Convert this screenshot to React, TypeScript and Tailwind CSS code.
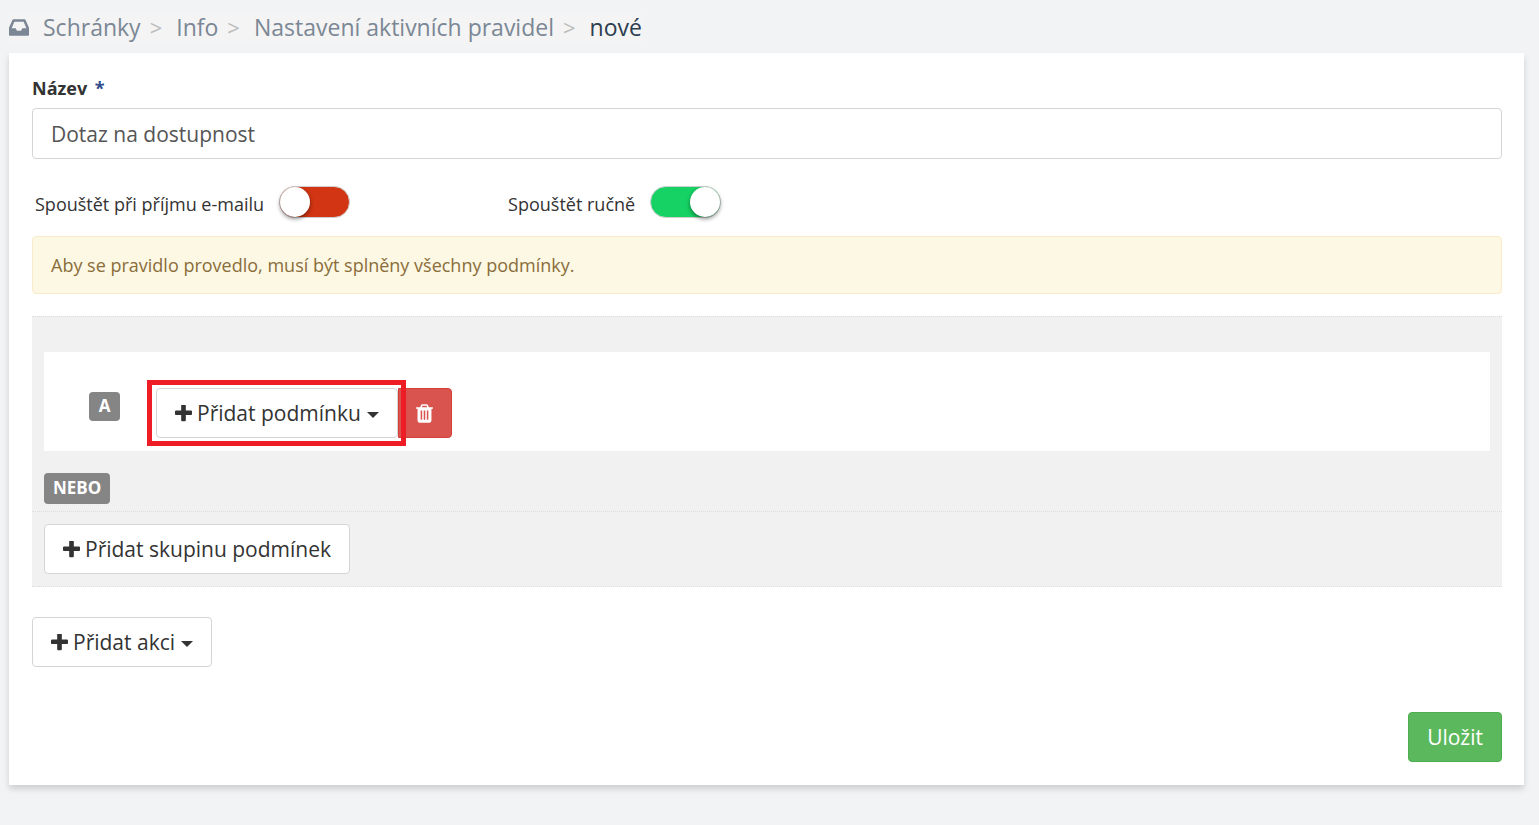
import { useState } from "react";

const BUTTON =
  "flex h-[50px] items-center rounded border border-[#d5d5d5] bg-white px-[18px] text-[21px] leading-[30px] text-[#333]";

function InboxIcon() {
  return (
    <svg viewBox="128 256 1536 1280" className="h-[17px] w-5" fill="currentColor">
      <path d="M1151 960h316q-1-3-2.500-8.500t-2.500-7.500l-212-496h-708l-212 496q-1 3-2.500 8.500t-2.500 7.500h316l95 192h320zm513 30v482q0 26-19 45t-45 19h-1408q-26 0-45-19t-19-45v-482q0-62 25-123l238-552q10-25 36.500-42t52.500-17h832q26 0 52.500 17t36.500 42l238 552q25 61 25 123z" />
    </svg>
  );
}

function PlusIcon() {
  return (
    <svg viewBox="192 192 1408 1408" className="mr-[5px] h-[17px] w-[17px]" fill="currentColor">
      <path d="M1600 736v192q0 40-28 68t-68 28h-416v416q0 40-28 68t-68 28h-192q-40 0-68-28t-28-68v-416h-416q-40 0-68-28t-28-68v-192q0-40 28-68t68-28h416v-416q0-40 28-68t68-28h192q40 0 68 28t28 68v416h416q40 0 68 28t28 68z" />
    </svg>
  );
}

function TrashIcon() {
  return (
    <svg viewBox="192 128 1408 1536" className="mt-px h-[19px] w-[17px]" fill="currentColor">
      <path d="M704 1376v-704q0-14-9-23t-23-9h-64q-14 0-23 9t-9 23v704q0 14 9 23t23 9h64q14 0 23-9t9-23zm256 0v-704q0-14-9-23t-23-9h-64q-14 0-23 9t-9 23v704q0 14 9 23t23 9h64q14 0 23-9t9-23zm256 0v-704q0-14-9-23t-23-9h-64q-14 0-23 9t-9 23v704q0 14 9 23t23 9h64q14 0 23-9t9-23zm-544-992h448l-48-117q-7-9-17-11h-317q-10 2-17 11zm928 32v64q0 14-9 23t-23 9h-96v948q0 83-47 143.500t-113 60.500h-832q-66 0-113-58.500t-47-141.500v-952h-96q-14 0-23-9t-9-23v-64q0-14 9-23t23-9h309l70-167q15-37 54-63t79-26h320q40 0 79 26t54 63l70 167h309q14 0 23 9t9 23z" />
    </svg>
  );
}

function Caret() {
  return (
    <svg viewBox="0 0 12 6" className="mt-1 ml-1.5 h-1.5 w-3" fill="currentColor">
      <path d="M0 0h12L6 6z" />
    </svg>
  );
}

function Separator() {
  return <span className="mr-3.5 ml-[9px] text-[22px] text-[#bbb]">&gt;</span>;
}

type SwitchProps = {
  label: string;
  checked: boolean;
  onChange: (checked: boolean) => void;
};

function Switch({ label, checked, onChange }: SwitchProps) {
  return (
    <label className="flex cursor-pointer items-center text-lg text-[#333]">
      <span className="mt-1">{label}</span>
      <span className="relative ml-[15px] h-8 w-[71px]">
        <input
          type="checkbox"
          checked={checked}
          onChange={(e) => onChange(e.target.checked)}
          className="peer block h-8 w-[71px] cursor-pointer appearance-none rounded-full border border-[#cfcfcf] bg-[#d13513] checked:bg-[#16d264]"
        />
        <span className="pointer-events-none absolute top-px left-px size-[30px] rounded-full bg-white shadow-[0_2px_4px_rgba(0,0,0,0.45)] peer-checked:left-10" />
      </span>
    </label>
  );
}

export default function App() {
  const [name, setName] = useState("Dotaz na dostupnost");
  const [onReceive, setOnReceive] = useState(false);
  const [manual, setManual] = useState(true);

  return (
    <div className="min-h-screen bg-[#f1f3f5] pt-[11px] pr-[15px] pb-10 pl-[9px] font-['Open_Sans',sans-serif]">
      <nav className="flex h-[34px] w-fit items-center rounded bg-[#f4f4f4] pb-0.5 text-[23px] text-[#7b8794]">
        <InboxIcon />
        <a href="#" className="ml-3.5">Schránky</a>
        <Separator />
        <a href="#">Info</a>
        <Separator />
        <a href="#">Nastavení aktivních pravidel</a>
        <Separator />
        <span className="text-[#2c3e50]">nové</span>
      </nav>

      <main className="mt-2 bg-white pt-[22px] pr-[22px] pb-[23px] pl-[23px] shadow-[0_4px_6px_rgba(0,0,0,0.15)]">
        <label htmlFor="name" className="block text-lg leading-[26px] font-bold text-[#333]">
          Název <span className="ml-[3px] text-[#2f4a8a]">*</span>
        </label>
        <input
          id="name"
          value={name}
          onChange={(e) => setName(e.target.value)}
          className="mt-[7px] block h-[51px] w-full rounded border border-[#d5d5d5] px-[18px] text-[21px] text-[#555]"
        />

        <div className="mt-[27px] flex gap-[158px] pl-[3px]">
          <Switch label="Spouštět při příjmu e-mailu" checked={onReceive} onChange={setOnReceive} />
          <Switch label="Spouštět ručně" checked={manual} onChange={setManual} />
        </div>

        <p className="mt-[18px] rounded border border-[#faebcc] bg-[#fcf8e3] px-[18px] py-[15px] text-lg leading-[26px] text-[#8a6d3b]">
          Aby se pravidlo provedlo, musí být splněny všechny podmínky.
        </p>

        <section className="mt-[22px] bg-[#f1f1f1]">
          <div className="border-t border-dotted border-[#ddd] px-3 pt-[35px] pb-[7px]">
            <div className="flex h-[99px] items-start bg-white pl-[45px]">
              <span className="mt-10 flex h-[29px] w-[31px] items-center justify-center rounded bg-[#858585] pb-0.5 text-[17px] font-bold text-white">
                A
              </span>
              <div className="relative mt-9 ml-9 flex">
                <button type="button" className={BUTTON}>
                  <PlusIcon />
                  Přidat podmínku
                  <Caret />
                </button>
                <button
                  type="button"
                  aria-label="Smazat"
                  className="flex h-[50px] w-[54px] items-center justify-center rounded-r border border-[#d43f3a] bg-[#d9534f] text-white"
                >
                  <TrashIcon />
                </button>
                <span className="pointer-events-none absolute -top-2 right-[46px] -bottom-2 -left-[9px] border-5 border-[#ee1c25]" />
              </div>
            </div>
            <span className="mt-[22px] flex h-[31px] w-fit items-center rounded bg-[#858585] px-[9px] pb-0.5 text-[17px] font-bold text-white">
              NEBO
            </span>
          </div>
          <div className="border-y border-dotted border-[#ddd] p-3">
            <button type="button" className={BUTTON}>
              <PlusIcon />
              Přidat skupinu podmínek
            </button>
          </div>
        </section>

        <div className="mt-[30px]">
          <button type="button" className={BUTTON}>
            <PlusIcon />
            Přidat akci
            <Caret />
          </button>
        </div>

        <div className="mt-[45px] flex justify-end">
          <button
            type="submit"
            className="flex h-[50px] items-center rounded border border-[#4cae4c] bg-[#5cb85c] px-[18px] text-[21px] leading-[30px] text-white"
          >
            Uložit
          </button>
        </div>
      </main>
    </div>
  );
}
